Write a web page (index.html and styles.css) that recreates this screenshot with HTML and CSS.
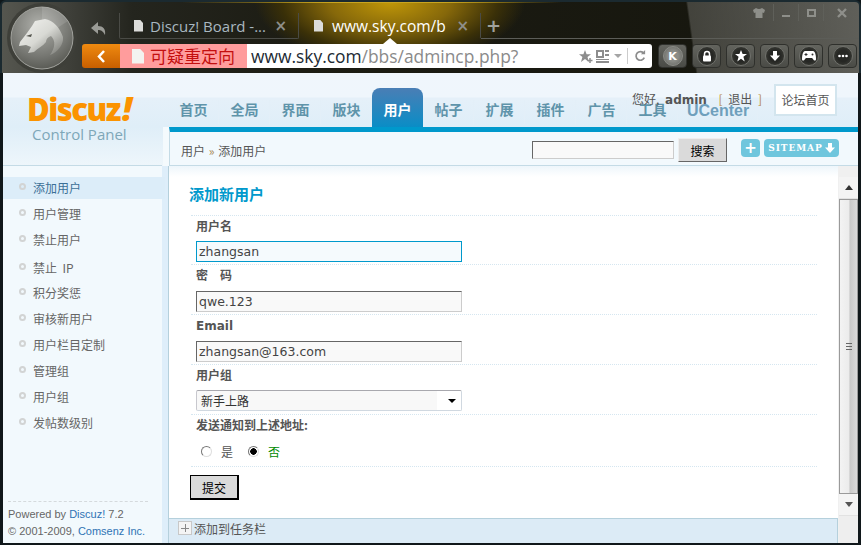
FILE: index.html
```html
<!DOCTYPE html>
<html lang="zh-CN">

<head>
    <meta charset="UTF-8">
    <title>Discuz! Board</title>
    <link rel="stylesheet" href="styles.css">
</head>

<body>
    <div class="window">
        <!-- browser chrome -->
        <div class="chrome">
            <div class="orb">
                <svg class="orb-cat" viewBox="0 0 64 64" width="64" height="64">
                    <defs>
                        <radialGradient id="orbFill" cx="45%" cy="30%" r="75%">
                            <stop offset="0" stop-color="#b0b1ac" />
                            <stop offset="0.65" stop-color="#777873" />
                            <stop offset="1" stop-color="#54554f" />
                        </radialGradient>
                        <linearGradient id="catFill" x1="0" y1="0" x2="1" y2="1">
                            <stop offset="0" stop-color="#f4f4f1" />
                            <stop offset="0.5" stop-color="#d8d9d4" />
                            <stop offset="1" stop-color="#72736e" />
                        </linearGradient>
                    </defs>
                    <circle cx="32" cy="32" r="31" fill="url(#orbFill)" stroke="#a2a39e" stroke-width="1" />
                    <path d="M32 32L32 1A31 31 0 0 1 58 15Z" fill="#fff" opacity="0.12" />
                    <path d="M25 15L35 13C43 14 50 22 53 31C54 38 48 46 40 49C45 42 46 35 41 30C38 31 36 33 36 36C33 40 28 42 24 46L18 47L21 41L16 39L9 40L10 36L17 27L22 20Z" fill="url(#catFill)" />
                    <path d="M16 30L22 28L21 31Z" fill="#55564f" />
                </svg>
            </div>
            <div class="tab-row">
                <svg class="back-arrow" viewBox="0 0 16 14" width="16" height="14">
                    <path d="M7 0L0 6L7 12V8C10 8 12 9 14 13C15 7 12 4 7 4Z" fill="#9a9b96" />
                </svg>
                <div class="tab">
                    <span class="tab-file"></span>
                    <span class="tab-text">Discuz! Board -...</span>
                    <span class="tab-close">×</span>
                </div>
                <div class="tab tab-current">
                    <span class="tab-file"></span>
                    <span class="tab-text">www.sky.com/b</span>
                    <span class="tab-close">×</span>
                </div>
                <div class="tab-tail">
                    <span class="tab-add">+</span>
                    <div class="win-btns">
                        <span class="win-cell win-cell-skin">
                            <svg viewBox="0 0 12 10" width="12" height="10">
                                <path d="M3 0L0 2L1 5L2.500 4.500V10H9.500V4.500L11 5L12 2L9 0Q6 2 3 0Z" fill="#8e8f8a" />
                            </svg>
                        </span>
                        <span class="win-cell"><span class="win-min"></span></span>
                        <span class="win-cell"><span class="win-max"></span></span>
                        <span class="win-cell win-cell-close">
                            <svg viewBox="0 0 10 10" width="10" height="10">
                                <path d="M1 1L9 9M9 1L1 9" stroke="#8e8f8a" stroke-width="2.400" />
                            </svg>
                        </span>
                    </div>
                </div>
            </div>
            <div class="addr-row">
                <div class="addr-back">
                    <svg viewBox="0 0 9 13" width="9" height="13">
                        <path d="M7 1L2 6.500L7 12" fill="none" stroke="#fff" stroke-width="2.500" />
                    </svg>
                </div>
                <div class="addr-warn"><span class="warn-file"></span>可疑重定向</div>
                <div class="addr-box">
                    <span class="addr-url"><b>www.sky.com</b>/bbs/admincp.php?</span>
                    <svg viewBox="0 0 14 13" width="14" height="13">
                        <path d="M6 0L7.600 4.200H12L8.500 7L9.800 12L6 9L2 12L3.400 7L0 4.200H4.400Z" fill="#8d8d8d" />
                        <path d="M11 8V13M8.500 10.500H13.500" stroke="#8d8d8d" stroke-width="1.500" />
                    </svg>
                    <svg viewBox="0 0 13 13" width="13" height="13">
                        <path d="M0 0H8V8H0ZM2 2V6H6V2ZM9 0H13V2H9ZM9 4H13V6H9ZM0 9H13V10H0ZM0 11H13V13H0Z" fill="#8d8d8d" />
                    </svg>
                    <span class="addr-caret"></span>
                    <span class="addr-sep"></span>
                    <svg viewBox="0 0 14 14" width="12" height="12">
                        <path d="M11.500 4A5 5 0 1 0 12 9" fill="none" stroke="#8d8d8d" stroke-width="2" />
                        <path d="M8 5H13V0Z" fill="#8d8d8d" />
                    </svg>
                </div>
                <div class="tool-btns">
                    <span class="tool-btn"><span class="tool-disc tool-disc-k">K</span></span>
                    <span class="tool-btn"><span class="tool-disc">
                        <svg viewBox="0 0 12 12" width="12" height="12">
                            <path d="M3.500 6V4A2.500 2.500 0 0 1 8.500 4V6" fill="none" stroke="#fff" stroke-width="1.500" />
                            <rect x="2" y="5.500" width="8" height="6" rx="1" fill="#fff" />
                        </svg>
                    </span></span>
                    <span class="tool-btn"><span class="tool-disc">
                        <svg viewBox="0 0 12 12" width="12" height="12">
                            <path d="M6 0L7.600 4H12L8.400 6.800L9.700 11.500L6 8.700L2.300 11.500L3.600 6.800L0 4H4.400Z" fill="#fff" />
                        </svg>
                    </span></span>
                    <span class="tool-btn"><span class="tool-disc">
                        <svg viewBox="0 0 12 12" width="12" height="12">
                            <path d="M4 1H8V5.500H11L6 11L1 5.500H4Z" fill="#fff" />
                        </svg>
                    </span></span>
                    <span class="tool-btn"><span class="tool-disc">
                        <svg viewBox="0 0 14 10" width="14" height="10">
                            <path d="M3 0H11C13 0 14 4 14 8C14 10 12 10 11 8L10 7H4L3 8C2 10 0 10 0 8C0 4 1 0 3 0Z" fill="#fff" />
                            <path d="M2.500 3.500H5.500M4 2V5" stroke="#333" stroke-width="1" />
                            <circle cx="10.500" cy="3.500" r="1" fill="#333" />
                        </svg>
                    </span></span>
                    <span class="tool-btn"><span class="tool-disc">
                        <svg viewBox="0 0 10 4" width="10" height="4">
                            <circle cx="1.500" cy="2" r="1.300" fill="#fff" />
                            <circle cx="5" cy="2" r="1.300" fill="#fff" />
                            <circle cx="8.500" cy="2" r="1.300" fill="#fff" />
                        </svg>
                    </span></span>
                </div>
            </div>
        </div>

        <!-- admin page -->
        <div class="admin">
            <div class="side">
                <div class="brand">
                    <div class="brand-name">Discuz<em>!</em></div>
                    <div class="brand-sub">Control Panel</div>
                </div>
                <ul class="menu">
                    <li class="menu-item menu-item-on">添加用户</li>
                    <li class="menu-item">用户管理</li>
                    <li class="menu-item">禁止用户</li>
                    <li class="menu-item menu-item-ip">禁止&nbsp;&nbsp;IP</li>
                    <li class="menu-item">积分奖惩</li>
                    <li class="menu-item">审核新用户</li>
                    <li class="menu-item">用户栏目定制</li>
                    <li class="menu-item">管理组</li>
                    <li class="menu-item">用户组</li>
                    <li class="menu-item">发帖数级别</li>
                </ul>
                <div class="side-foot">
                    <p>Powered by <a>Discuz!</a> 7.2</p>
                    <p>© 2001-2009, <a>Comsenz Inc.</a></p>
                </div>
            </div>

            <div class="work">
                <div class="nav">
                    <a class="nav-item">首页</a>
                    <a class="nav-item">全局</a>
                    <a class="nav-item">界面</a>
                    <a class="nav-item">版块</a>
                    <a class="nav-item nav-item-on">用户</a>
                    <a class="nav-item">帖子</a>
                    <a class="nav-item">扩展</a>
                    <a class="nav-item">插件</a>
                    <a class="nav-item">广告</a>
                    <a class="nav-item">工具</a>
                    <a class="nav-item nav-item-wide">UCenter</a>
                </div>
                <div class="crumb">
                    <span class="crumb-path">用户 <i>»</i> 添加用户</span>
                    <input class="crumb-input" type="text">
                    <button class="crumb-btn">搜索</button>
                    <span class="map-plus">+</span>
                    <span class="map-link">SITEMAP
                        <svg viewBox="0 0 10 10" width="10" height="10">
                            <path d="M3 0H7V4.500H10L5 10L0 4.500H3Z" fill="#fff" />
                        </svg>
                    </span>
                </div>
                <div class="content">
                    <div class="pane">
                        <div class="form-area">
                            <h3 class="form-title">添加新用户</h3>
                            <div class="form-row form-row-short">
                                <label class="form-label">用户名</label>
                                <input class="field field-focus" type="text" value="zhangsan">
                            </div>
                            <div class="form-row">
                                <label class="form-label">密　码</label>
                                <input class="field" type="text" value="qwe.123">
                            </div>
                            <div class="form-row">
                                <label class="form-label form-label-latin">Email</label>
                                <input class="field" type="text" value="zhangsan@163.com">
                            </div>
                            <div class="form-row form-row-select">
                                <label class="form-label">用户组</label>
                                <div class="select-wrap">
                                    <select class="field-select">
                                        <option>新手上路</option>
                                    </select>
                                </div>
                            </div>
                            <div class="form-row form-row-radio">
                                <label class="form-label">发送通知到上述地址:</label>
                                <div class="radios">
                                    <input class="radio" type="radio" name="notify">
                                    <span class="radio-text">是</span>
                                    <input class="radio" type="radio" name="notify" checked>
                                    <span class="radio-text radio-text-on">否</span>
                                </div>
                            </div>
                            <div class="form-submit"><button class="submit-btn">提交</button></div>
                        </div>
                        <div class="taskbar"><span class="task-plus"></span>添加到任务栏</div>
                    </div>
                    <div class="scrollbar">
                        <span class="scroll-btn"><span class="scroll-up"></span></span>
                        <span class="scroll-thumb"><span class="scroll-grip"></span></span>
                        <span class="scroll-btn"><span class="scroll-down"></span></span>
                    </div>
                </div>
            </div>

            <div class="greeting">您好, <b>admin</b> <i>[</i> 退出 <i>]</i></div>
            <a class="forum-link">论坛首页</a>
        </div>
    </div>
</body>

</html>
```

FILE: styles.css
```css
html,
body {
    margin: 0;
    padding: 0;
    height: 545px;
    overflow: hidden;
    background: #10171a;
}

body {
    font-family: "Noto Sans CJK SC", "DejaVu Sans", sans-serif;
    font-size: 12px;
    color: #555;
}

ul,
p,
h3 {
    margin: 0;
    padding: 0;
}

.window {
    width: 861px;
    height: 545px;
    display: flex;
    flex-direction: column;
}

/* browser chrome */
.chrome {
    position: relative;
    height: 73px;
    box-sizing: border-box;
    padding-left: 80px;
    border: 2px solid #1b2a30;
    border-bottom: none;
    border-radius: 6px 6px 0 0;
    background:
        linear-gradient(90deg, transparent 180px, #c9a520 330px, #c9a520 440px, transparent 560px) 0 0 / 100% 1px no-repeat,
        linear-gradient(82deg, transparent 687px, rgba(110, 110, 105, 0.5) 689px, rgba(120, 120, 115, 0.75) 100%),
        radial-gradient(ellipse 135px 62px at 388px 0, #c09708 0, #86680a 45%, #3a3008 80%, transparent 100%),
        linear-gradient(90deg, #55564f 0, #3d3e38 70px, #24251e 130px, #1c1c13 300px, #15150d 100%);
}

.orb {
    position: absolute;
    left: 5px;
    top: 1px;
    width: 70px;
    height: 70px;
    border-radius: 50%;
    background: #3e3f39;
    display: flex;
    align-items: center;
    justify-content: center;
}

.tab-row {
    display: flex;
    align-items: stretch;
    height: 37px;
    box-sizing: border-box;
    padding-top: 11px;
}

.back-arrow {
    margin: 9px 12px 0 9px;
}

.tab {
    width: 180px;
    box-sizing: border-box;
    display: flex;
    align-items: center;
    padding: 0 11px 0 14px;
    border: 1px solid #4a4b46;
    border-width: 0 1px 1px 1px;
    border-radius: 0 0 2px 2px;
}

.tab-current {
    border-left: none;
    border-bottom-color: transparent;
    padding-left: 15px;
    width: 182px;
}

.tab-file,
.warn-file {
    width: 9px;
    height: 12px;
    flex: none;
    background: #dcdcda;
    clip-path: polygon(0 0, 65% 0, 100% 30%, 100% 100%, 0 100%);
}

.tab-file {
    margin-right: 7px;
}

.tab-text {
    flex: 1;
    font-family: "Open Sans", sans-serif;
    font-size: 15px;
    color: #a9b8c0;
    white-space: nowrap;
}

.tab-current .tab-text {
    font-size: 15.500px;
    color: #fff;
    margin-left: 2px;
}

.tab-close {
    font-family: "DejaVu Sans", sans-serif;
    font-size: 15px;
    font-weight: bold;
    color: #8f8f8a;
}

.tab-tail {
    flex: 1;
    display: flex;
    border-bottom: 1px solid #5c5d58;
}

.tab-add {
    margin-left: 5px;
    font-family: "DejaVu Sans", sans-serif;
    font-size: 18px;
    line-height: 26px;
    font-weight: bold;
    color: #a0a19c;
}

.win-btns {
    margin-left: auto;
    margin-top: -9px;
    height: 17px;
    display: flex;
}

.win-cell {
    width: 25px;
    box-sizing: border-box;
    display: flex;
    align-items: center;
    justify-content: center;
    border-left: 1px solid #5f605a;
}

.win-cell-skin {
    width: 28px;
    border-left: none;
}

.win-cell-close {
    width: 36px;
}

.win-min {
    width: 8px;
    height: 2px;
    margin-top: 6px;
    background: #8e8f8a;
}

.win-max {
    width: 9px;
    height: 8px;
    box-sizing: border-box;
    border: 2px solid #8e8f8a;
}

.addr-row {
    display: flex;
    height: 24px;
    margin-top: 5px;
}

.addr-back {
    width: 38px;
    display: flex;
    align-items: center;
    justify-content: center;
    border-radius: 3px 0 0 3px;
    background: linear-gradient(#ef8a10, #c85f00);
}

.addr-warn {
    width: 127px;
    display: flex;
    align-items: center;
    box-sizing: border-box;
    padding-left: 12px;
    font-size: 17px;
    line-height: 24px;
    color: #c40f0f;
    background: #ff9c9c;
}

.warn-file {
    width: 12px;
    height: 15px;
    margin-right: 6px;
    background: #f3f3f0;
}

.addr-box {
    position: relative;
    width: 405px;
    display: flex;
    align-items: center;
    box-sizing: border-box;
    padding: 0 6px 0 4px;
    gap: 3px;
    background: #fff;
    border-radius: 0 3px 3px 0;
}

/* white notch under the current tab */
.addr-box::before {
    content: "";
    position: absolute;
    left: 136px;
    top: -6px;
    border: 7px solid transparent;
    border-bottom: 6px solid #fff;
    border-top: none;
}

.addr-url {
    flex: 1;
    font-family: "Open Sans", sans-serif;
    font-size: 17.400px;
    color: #8a8a8a;
    white-space: nowrap;
}

.addr-url b {
    font-weight: normal;
    color: #1c2a33;
}

.addr-caret {
    width: 0;
    height: 0;
    margin: 0 2px;
    border: 4px solid transparent;
    border-top: 4px solid #a5a5a5;
    border-bottom: none;
}

.addr-sep {
    width: 1px;
    height: 16px;
    margin-right: 3px;
    background: #ccc;
}

.tool-btns {
    display: flex;
    gap: 5px;
    margin-left: 6px;
}

.tool-btn {
    width: 29px;
    height: 24px;
    box-sizing: border-box;
    display: flex;
    align-items: center;
    justify-content: center;
    border: 1px solid #2f302c;
    border-radius: 4px;
    background: linear-gradient(#63645e, #4a4b46);
}

.tool-disc {
    width: 20px;
    height: 20px;
    box-sizing: border-box;
    display: flex;
    align-items: center;
    justify-content: center;
    border: 1px solid #6f706b;
    border-radius: 50%;
    background: radial-gradient(circle, #262724 45%, #45463f 100%);
    color: #fff;
}

.tool-disc-k {
    font-family: "DejaVu Sans", sans-serif;
    font-size: 11px;
    font-weight: bold;
    border-color: #8a8b86;
    background: radial-gradient(circle, #8b8c87 40%, #5f605b 100%);
}

/* admin page */
.admin {
    position: relative;
    flex: 1;
    display: flex;
    margin: 0 3px 2px;
    background: linear-gradient(#f0f6fc 0, #eff6fc 24px, #e5f0f9 25px, #dfeef8 54px, #eef6fb 93px);
}

.side {
    width: 159px;
    flex: none;
    display: flex;
    flex-direction: column;
}

.brand {
    height: 93px;
    box-sizing: border-box;
    padding: 18px 0 0 24px;
    border-bottom: 1px solid #c4dbe6;
}

.brand-name {
    height: 35px;
    font-family: "Open Sans", sans-serif;
    font-size: 31px;
    line-height: 35px;
    font-weight: 800;
    letter-spacing: -1.500px;
    color: #fb9300;
    white-space: nowrap;
}

.brand-name em {
    font-size: 34px;
    line-height: 35px;
    margin-left: 2px;
}

.brand-sub {
    margin-left: 5px;
    font-family: "Open Sans", sans-serif;
    font-size: 15px;
    line-height: 17px;
    color: #7ea7b8;
    white-space: nowrap;
}

.menu {
    flex: 1;
    list-style: none;
    padding-top: 11px;
    background: #f2f9fd;
    margin-right: -3px;
}

.menu-item {
    position: relative;
    height: 22px;
    margin-bottom: 4px;
    padding-left: 30px;
    line-height: 22px;
    color: #666;
}

.menu-item::before {
    content: "";
    position: absolute;
    left: 16px;
    top: 6px;
    width: 7px;
    height: 7px;
    box-sizing: border-box;
    border: 2px solid #d2d4d4;
    border-radius: 50%;
}

.menu-item-on {
    color: #3b6f96;
    background: #dcedf9;
}

/* this row sits 2px lower in the original */
.menu-item-ip {
    margin-top: 6px;
    margin-bottom: 3px;
}

.side-foot {
    background: #f2f9fd;
    margin-right: -3px;
    padding: 0 0 3px 5px;
    font-family: "Liberation Sans", sans-serif;
    font-size: 11px;
    line-height: 17px;
    color: #666;
}

.side-foot p:first-child {
    border-top: 1px dashed #d5dadd;
    margin-right: 17px;
    padding-top: 4px;
}

.side-foot a {
    color: #2f73b4;
}

.work {
    flex: 1;
    display: flex;
    flex-direction: column;
    min-width: 0;
}

.nav {
    display: flex;
    align-items: flex-end;
    height: 54px;
    box-sizing: border-box;
    padding-left: 6px;
}

.nav-item {
    width: 51px;
    height: 39px;
    box-sizing: border-box;
    text-align: center;
    line-height: 42px;
    font-size: 14px;
    font-weight: bold;
    color: #5f94aa;
    background: linear-gradient(#e3eff8, #e3eff8) right 12px / 1px 24px no-repeat;
}

.nav-item-wide {
    width: 80px;
    line-height: 45px;
    font-family: "Liberation Sans", sans-serif;
    font-size: 16px;
    color: #6f9fbc;
}

.nav-item-on {
    color: #fff;
    border-radius: 8px 8px 0 0;
    background: linear-gradient(#4a7eb5, #0a8dc6);
}

.crumb {
    height: 39px;
    box-sizing: border-box;
    display: flex;
    align-items: center;
    padding: 3px 19px 0 11px;
    margin-left: 7px;
    border-top: 5px solid #0099cc;
    border-bottom: 1px solid #c4dbe6;
    border-left: 1px solid #c4dbe6;
    background: #f2f9fd;
    box-shadow: -6px 0 0 #f4fafd;
}

.crumb-path {
    margin-right: auto;
    color: #555;
}

.crumb-path i {
    font-style: normal;
    margin: 0 1px;
    color: #a88a55;
}

.crumb-input {
    width: 142px;
    height: 18px;
    box-sizing: border-box;
    margin: 0 4px 0 0;
    background: #f9f9f9;
    border: 1px solid;
    border-color: #666 #ccc #ccc #666;
}

.crumb-btn {
    width: 49px;
    height: 24px;
    padding: 0;
    margin: 0 14px 0 0;
    font: inherit;
    color: #000;
    background: #dadada;
    border: 1px solid;
    border-color: #eee #666 #666 #eee;
}

.map-plus,
.map-link {
    height: 18px;
    margin-top: -5px;
    display: flex;
    align-items: center;
    justify-content: center;
    border-radius: 4px;
    background: #6fc6dd;
    color: #fff;
    font-family: "DejaVu Serif", serif;
    font-weight: bold;
}

.map-plus {
    width: 19px;
    margin-right: 4px;
    font-family: "DejaVu Sans", sans-serif;
    font-size: 15px;
}

.map-link {
    width: 75px;
    gap: 2px;
    font-size: 9px;
    letter-spacing: 0.900px;
}

.content {
    flex: 1;
    display: flex;
    margin-left: 6px;
    min-height: 0;
    border-left: 1px solid #b5d0dc;
    background: #f0f0f0;
    box-shadow: -6px 0 0 #deeefa;
}

.pane {
    width: 669px;
    display: flex;
    flex-direction: column;
}

.form-area {
    flex: 1;
    padding: 19px 21px 0 20px;
    background: linear-gradient(#eef6fb, #fff 11px);
}

.form-title {
    height: 30px;
    font-size: 15px;
    line-height: 18px;
    color: #0099cc;
}

.form-row {
    height: 50px;
    box-sizing: border-box;
    margin-left: 2px;
    padding: 0 0 0 5px;
    border-top: 1px dotted #d5e6f0;
    display: flex;
    flex-direction: column;
}

.form-label {
    height: 26px;
    line-height: 20px;
    font-weight: bold;
    color: #555;
    flex: none;
}

.form-row-short {
    height: 49px;
}

.form-row-short .form-label,
.form-row-select .form-label {
    height: 25px;
}

.form-label-latin {
    line-height: 22px;
    font-family: "DejaVu Sans", sans-serif;
}

.field {
    width: 266px;
    height: 21px;
    box-sizing: border-box;
    margin: 0;
    padding: 0 2px;
    font-family: "DejaVu Sans", sans-serif;
    font-size: 12.500px;
    color: #444;
    background: #f9f9f9;
    border: 1px solid;
    border-color: #666 #ccc #ccc #666;
    outline: none;
}

.field-focus {
    border: 1px solid #0099cc;
    background: #f5fafd;
}

.select-wrap {
    position: relative;
    width: 266px;
    height: 21px;
}

/* the arrow sits over the select */
.select-wrap::after {
    content: "";
    position: absolute;
    right: 6px;
    top: 9px;
    border: 4px solid transparent;
    border-top: 4px solid #000;
    border-bottom: none;
}

.field-select {
    width: 266px;
    height: 21px;
    margin: 0;
    padding: 0 0 0 4px;
    appearance: none;
    font: inherit;
    color: #333;
    border: 1px solid #b5b5b9;
    border-color: #a8a8ae #d0d8e0 #d0d8e0 #c8c8ce;
    border-radius: 2px;
    background: linear-gradient(90deg, #f8f8f8 240px, #fff 240px);
}

.form-row-radio {
    height: 52px;
}

.form-row-radio .form-label {
    height: 25px;
}

.radios {
    display: flex;
    align-items: center;
    height: 22px;
    padding-left: 5px;
}

.radio {
    appearance: none;
    width: 11px;
    height: 11px;
    box-sizing: border-box;
    margin: 0 9px 0 0;
    border: 1px solid #8d8d8d;
    border-color: #777 #ddd #ddd #777;
    border-radius: 50%;
    background: #fff;
}

.radio:checked {
    background: radial-gradient(circle, #000 3px, #fff 3.500px);
}

.radio-text {
    width: 27px;
}

.radio-text-on {
    color: #008a00;
}

.form-submit {
    border-top: 1px dotted #d5e6f0;
    margin-left: 2px;
    padding-top: 8px;
}

.submit-btn {
    width: 49px;
    height: 25px;
    margin-left: -1px;
    padding: 0;
    font: inherit;
    color: #000;
    background: #dadada;
    border: 1px solid #000;
    border-right-width: 2px;
    border-bottom-width: 2px;
}

.taskbar {
    height: 25px;
    box-sizing: border-box;
    display: flex;
    align-items: center;
    padding: 0 0 6px 9px;
    background: #dcebf6;
    border-top: 1px solid #b5d0dc;
    border-right: 1px solid #b5d0dc;
}

.task-plus {
    width: 14px;
    height: 14px;
    box-sizing: border-box;
    margin-right: 2px;
    border: 1px solid #c8c8c8;
    background:
        linear-gradient(#888, #888) center / 8px 1px no-repeat,
        linear-gradient(#888, #888) center / 1px 8px no-repeat,
        #f4f4f4;
}

.scrollbar {
    flex: 1;
    display: flex;
    flex-direction: column;
    margin: 11px 0 0 1px;
    background: #eee;
}

.scroll-btn {
    height: 21px;
    display: flex;
    align-items: center;
    justify-content: center;
    background: #f4f4f4;
    border-bottom: 1px solid #e2e2e2;
}

.scroll-up {
    border: 4px solid transparent;
    border-bottom: 5px solid #333;
    border-top: none;
}

.scroll-down {
    border: 4px solid transparent;
    border-top: 5px solid #555;
    border-bottom: none;
}

.scroll-thumb {
    height: 295px;
    box-sizing: border-box;
    display: flex;
    align-items: center;
    justify-content: center;
    border: 1px solid #9a9a9a;
    background: linear-gradient(90deg, #f3f3f3 0, #ececec 50%, #c9c9c9 60%, #dadada 100%);
}

.scroll-grip {
    width: 6px;
    height: 5px;
    border-top: 1px solid #666;
    border-bottom: 1px solid #666;
    background: linear-gradient(#666, #666) center / 6px 1px no-repeat;
}

/* overlaps the nav, as in the original page */
.greeting {
    position: absolute;
    left: 629px;
    top: 17px;
    line-height: 18px;
    color: #555;
    white-space: nowrap;
}

.greeting b {
    font-family: "DejaVu Sans", sans-serif;
    margin: 0 6px 0 3px;
}

.greeting i {
    font-style: normal;
    margin: 0 3px;
    color: #b48a45;
}

.forum-link {
    position: absolute;
    left: 771px;
    top: 11px;
    width: 63px;
    height: 32px;
    box-sizing: border-box;
    line-height: 28px;
    text-align: center;
    color: #555;
    background: #fff;
    border: 2px solid #d3e5ee;
}
```
